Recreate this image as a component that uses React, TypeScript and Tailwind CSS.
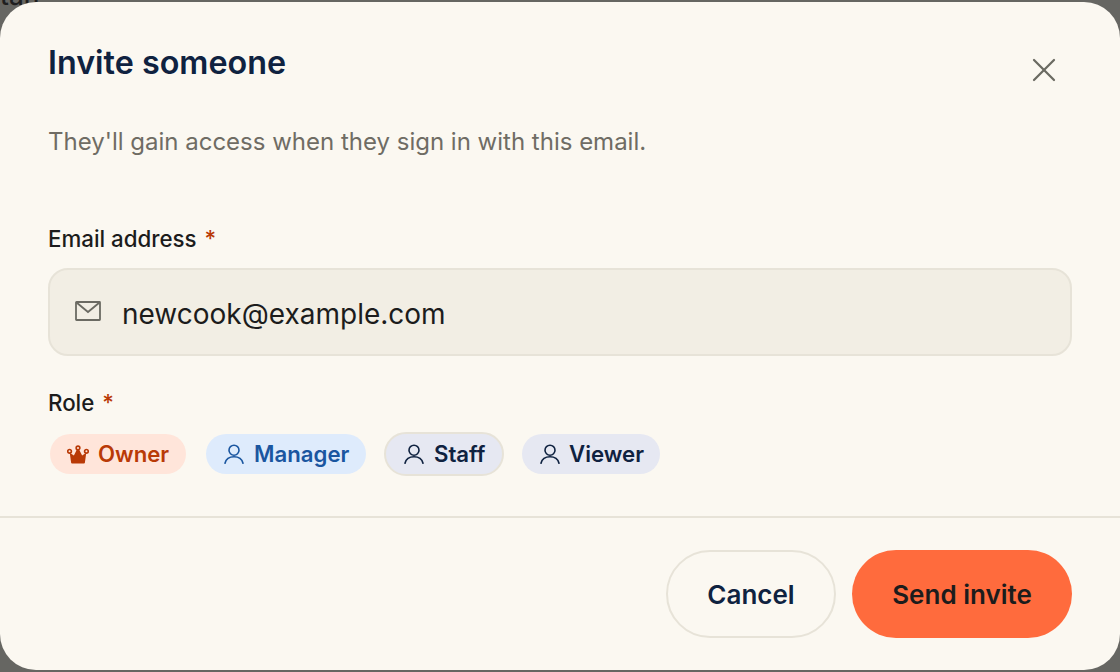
import { X } from 'lucide-react';

function Crown() {
  return (
    <svg viewBox="0 0 24 20" className="w-[22px] h-[19px] shrink-0" fill="#b93a07">
      <circle cx="2.8" cy="6.5" r="2" fill="none" stroke="#b93a07" strokeWidth="1.8" />
      <circle cx="12" cy="2.8" r="2" fill="none" stroke="#b93a07" strokeWidth="1.8" />
      <circle cx="21.2" cy="6.5" r="2" fill="none" stroke="#b93a07" strokeWidth="1.8" />
      <path d="M3 8 L7.5 11 L10.5 5 L13.5 5 L16.5 11 L21 8 L19.5 19 Q19.4 19.8 18.5 19.8 L5.5 19.8 Q4.6 19.8 4.5 19 Z" />
    </svg>
  );
}

function Person() {
  return (
    <svg viewBox="0 0 20 20" className="w-5 h-5 shrink-0" fill="none" stroke="currentColor" strokeWidth="1.6" strokeLinecap="round">
      <circle cx="10" cy="6.2" r="5" />
      <path d="M1 19.2 C2 15 5.5 12.8 10 12.8 C14.5 12.8 18 15 19 19.2" />
    </svg>
  );
}

function MailIcon() {
  return (
    <svg viewBox="0 0 26 20" className="w-[26px] h-5 shrink-0 -mt-[2px]" fill="none" stroke="#6b6a62" strokeWidth="1.8">
      <rect x="1" y="1" width="24" height="18" rx="0.5" />
      <path d="M1.5 1.5 L13 11 L24.5 1.5" />
    </svg>
  );
}

function Chip({ label, icon, className }: { label: string; icon: React.ReactNode; className: string }) {
  return (
    <div className={`flex items-center gap-[10px] h-10 rounded-full text-[22.2px] font-semibold ${className}`}>
      {icon}
      <span>{label}</span>
    </div>
  );
}

export default function App() {
  return (
    <div className="relative w-[1120px] h-[672px] overflow-hidden bg-[#666662] py-[2px] font-['Inter',sans-serif]">
      {/* page behind the backdrop */}
      <div className="absolute left-0 -top-[24px] text-[26px] font-medium text-[#1f1f1f]">tan</div>

      <div className="relative h-[668px] rounded-[36px] bg-[#fbf8f1] flex flex-col">
        <div className="flex-1 px-12 pt-[41px]">
          <div className="flex justify-between">
            <h2 className="text-[32.3px] leading-[40px] font-semibold text-[#0f2240]">Invite someone</h2>
            <button className="mr-[12px] mt-[11px] h-8 w-8 flex items-center justify-center text-[#6b6a62]">
              <X size={40} strokeWidth={1.35} className="shrink-0" />
            </button>
          </div>
          <p className="mt-[38px] text-[24px] leading-9 text-[#6f6c64]">
            They'll gain access when they sign in with this email.
          </p>

          <label className="mt-[63px] block text-[22.3px] leading-8 font-medium text-[#1c1c1c]">
            Email address <span className="ml-[2px] text-[#b93a07]">*</span>
          </label>
          <div className="mt-[13px] flex h-[88px] items-center gap-[21px] rounded-[20px] border-2 border-[#e7e3d8] bg-[#f2eee4] px-[25px]">
            <MailIcon />
            <span className="text-[28px] pt-[4px] text-[#1c1c1c]">newcook@example.com</span>
          </div>

          <label className="mt-[31px] block text-[22.3px] leading-8 font-medium text-[#1c1c1c]">
            Role <span className="ml-[2px] text-[#b93a07]">*</span>
          </label>
          <div className="mt-[15px] flex items-center gap-[18px] pl-[2px]">
            <Chip label="Owner" icon={<Crown />} className="mr-[2px] w-[136px] pl-[17px] !gap-[9px] bg-[#ffe5da] text-[#b93a07]" />
            <Chip label="Manager" icon={<Person />} className="w-[160px] pl-[18px] bg-[#deebfc] text-[#1a56a0]" />
            <Chip
              label="Staff"
              icon={<Person />}
              className="-my-[2px] h-11 w-[120px] pl-[18px] border-2 border-[#e7e3d8] bg-[#e6e8f2] text-[#0f2240]"
            />
            <Chip label="Viewer" icon={<Person />} className="w-[138px] pl-[18px] !gap-[9px] bg-[#e6e8f2] text-[#0f2240]" />
          </div>
        </div>

        <div className="flex justify-end gap-4 border-t-2 border-[#e7e3d8] px-12 pt-[32px] pb-[32px]">
          <button className="h-[88px] w-[170px] rounded-full border-2 border-[#e7e3d8] pt-[1px] text-[26px] font-semibold text-[#0f2240]">
            Cancel
          </button>
          <button className="h-[88px] w-[220px] rounded-full bg-[#ff6b3d] pt-[1px] text-[26px] font-semibold text-[#1c1c1c]">
            Send invite
          </button>
        </div>
      </div>
    </div>
  );
}
